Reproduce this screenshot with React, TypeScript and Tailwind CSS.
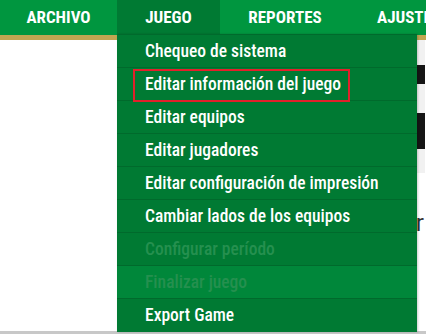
import React from 'react';

const font = { fontFamily: '"Roboto Condensed", "Liberation Sans Narrow", "Arial Narrow", Roboto, sans-serif' };

interface MenuItem {
    label: string;
    disabled?: boolean;
    hover?: boolean;
}

const items: MenuItem[] = [
    { label: 'Chequeo de sistema' },
    { label: 'Editar información del juego' },
    { label: 'Editar equipos' },
    { label: 'Editar jugadores' },
    { label: 'Editar configuración de impresión' },
    { label: 'Cambiar lados de los equipos' },
    { label: 'Configurar período', disabled: true },
    { label: 'Finalizar juego', disabled: true, hover: true },
    { label: 'Export Game' },
];

const App: React.FC = () => {
    return (
        <div className="relative w-[426px] h-[334px] overflow-hidden bg-white" style={font}>
            {/* Top nav */}
            <div className="flex h-[35px] bg-[#00963f] text-white font-bold text-[17px] uppercase whitespace-nowrap">
                <div className="w-[117px] shrink-0 flex items-center justify-center">Archivo</div>
                <div className="relative w-[103px] shrink-0 flex items-center justify-center bg-[#007a33]">
                    Juego
                    {/* Dropdown */}
                    <div className="absolute left-0 top-[34px] w-[300px] bg-[#007a33] border-t border-[#006a2c] normal-case font-medium text-[17.5px] z-10 shadow-[1px_0_2px_rgba(0,0,0,0.2)]">
                        {items.map((item, i) => (
                            <div
                                key={item.label}
                                className={`h-[33px] flex items-center pl-[28px] ${i < items.length - 1 ? 'border-b border-[#006a2c]' : ''} ${item.hover ? 'bg-[#00873a]' : ''} ${item.disabled ? 'text-[#25904f]' : 'text-white'}`}
                            >
                                {item.label}
                            </div>
                        ))}
                        {/* annotation box */}
                        <div className="absolute left-[16px] top-[34px] w-[217px] h-[33px] border-2 border-[#e3202b] pointer-events-none"></div>
                    </div>
                </div>
                <div className="w-[130px] shrink-0 flex items-center justify-center">Reportes</div>
                <div className="pl-[27px] shrink-0 flex items-center">Ajustes</div>
            </div>
            <div className="h-[5px] bg-[#c1a652]"></div>

            {/* Background page content */}
            <div className="flex justify-end">
                <div className="w-[130px] h-[133px] bg-[#f1f1f1] flex flex-col gap-[29px] pt-[25px] mr-[1px]">
                    <div className="h-[19px] bg-[#151515]"></div>
                    <div className="h-[36px] bg-[#151515]"></div>
                </div>
            </div>
            <div className="flex justify-end pr-[2px] mt-[38px]">
                <span className="text-[24px] text-[#333] leading-none" style={{ fontFamily: 'Roboto, sans-serif' }}>r</span>
            </div>
            <div className="absolute left-0 right-0 bottom-0 h-[3px] bg-[#c8c8c8]"></div>
        </div>
    );
};

export default App;
